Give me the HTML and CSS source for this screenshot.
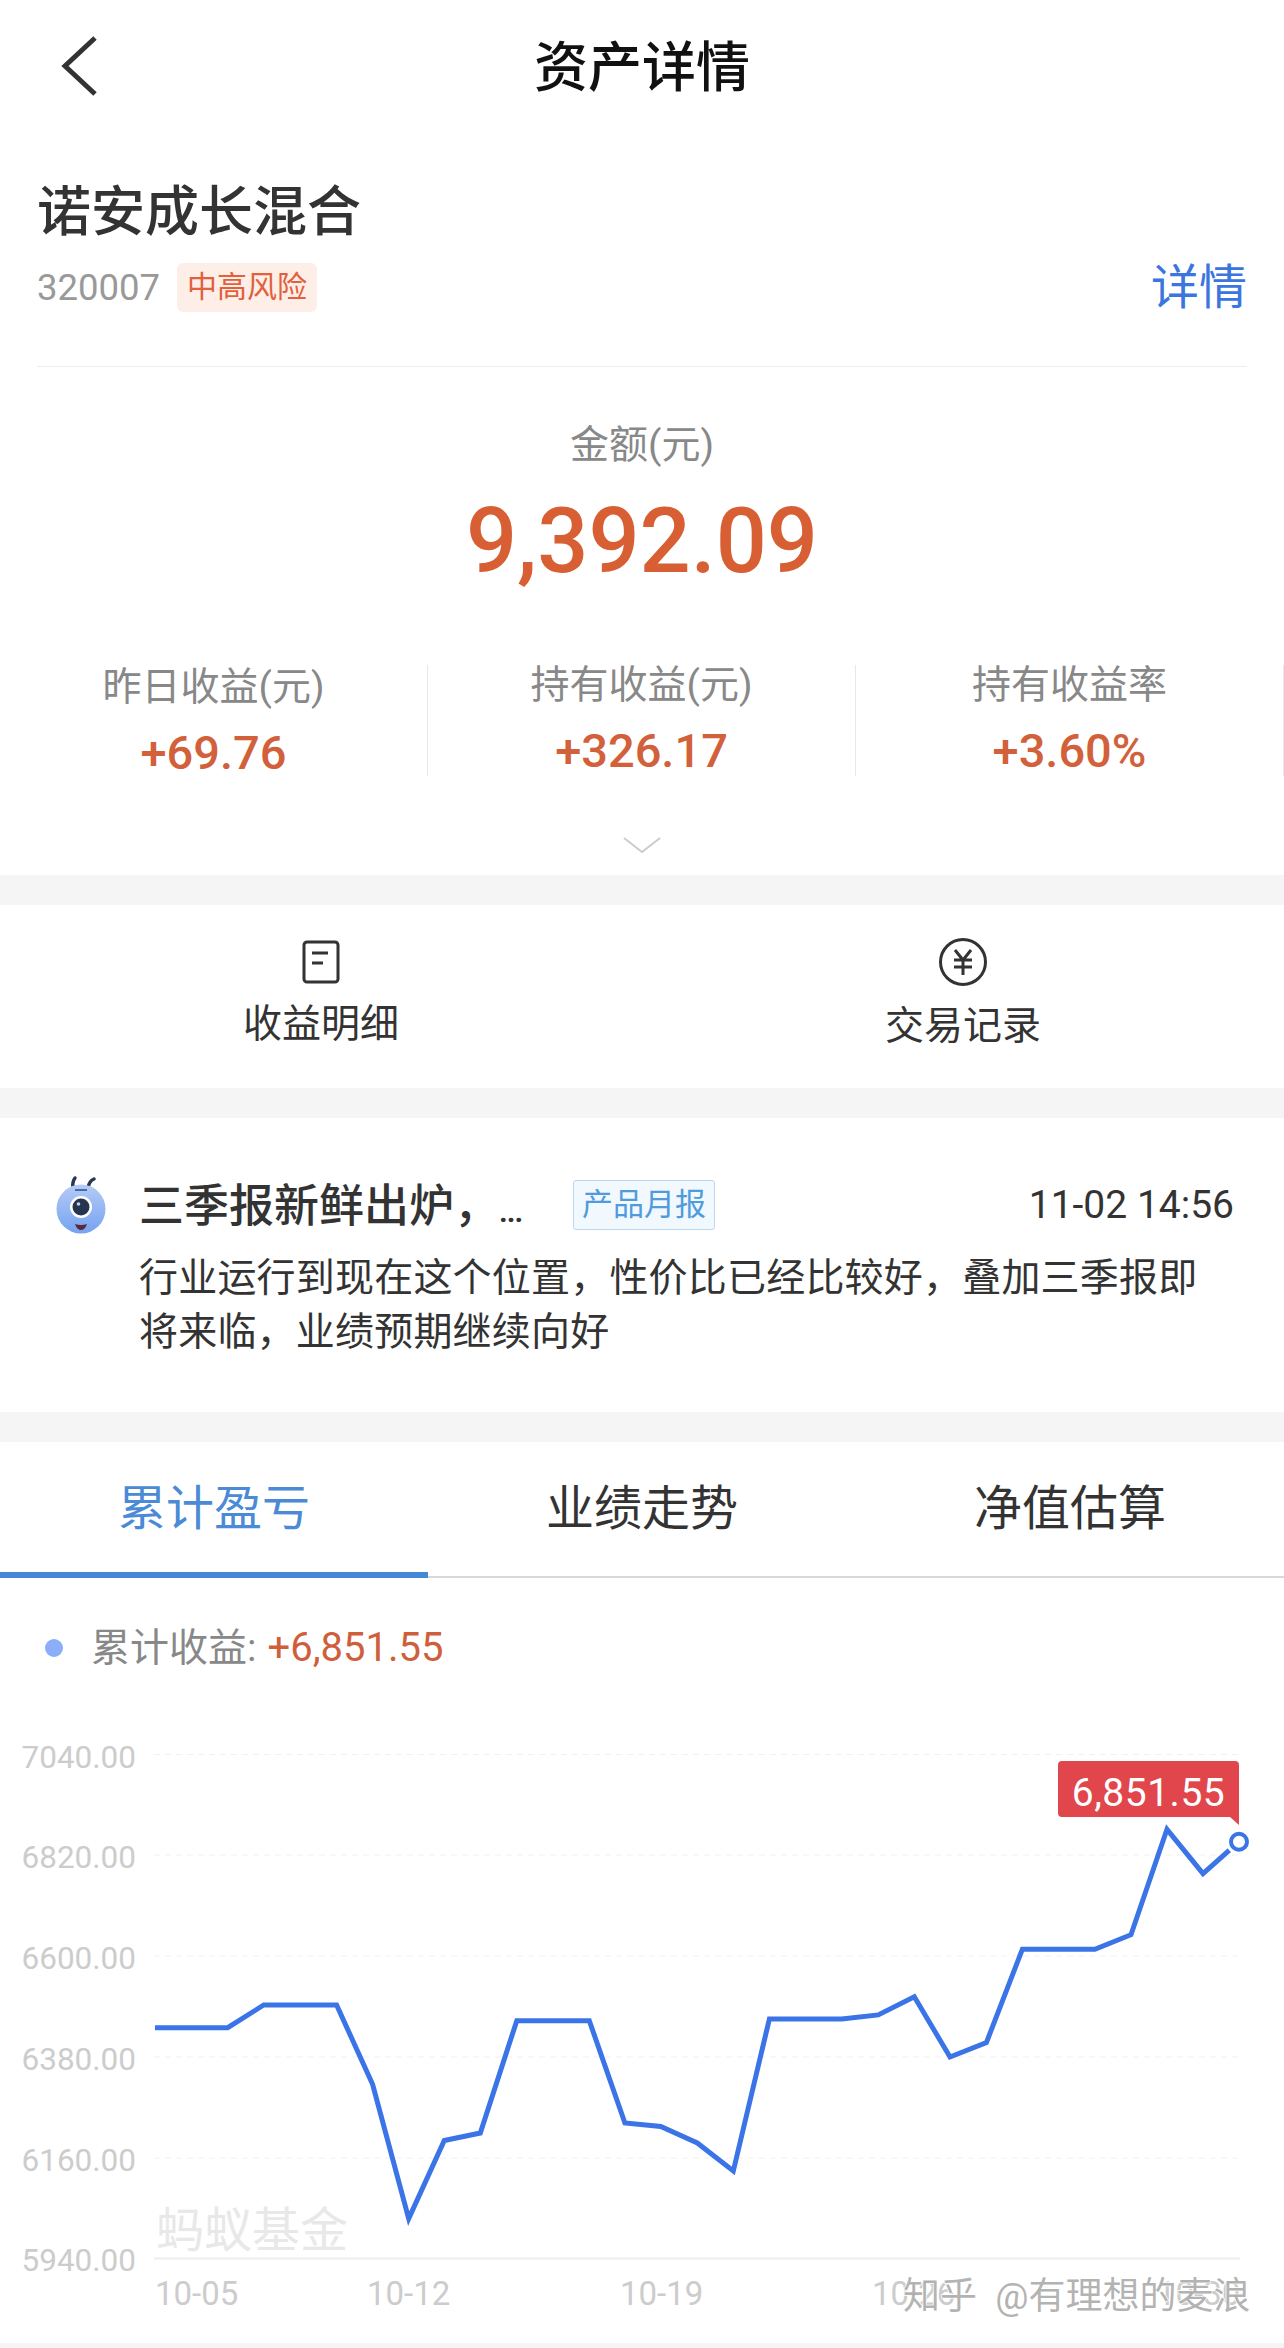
FILE: index.html
```html
<!DOCTYPE html>
<html lang="zh-CN">

<head>
    <meta charset="UTF-8">
    <title>资产详情</title>
    <link rel="stylesheet" href="styles.css">
</head>

<body>
    <div class="nav">
        <svg class="back" width="40" height="62" viewBox="0 0 40 62">
            <path d="M35 3 L5 31 L35 59"></path>
        </svg>
        <h1 class="nav-title">资产详情</h1>
    </div>

    <div class="fund">
        <div class="fund-name">诺安成长混合</div>
        <div class="fund-row">
            <div class="fund-meta">
                <span class="fund-code">320007</span>
                <span class="risk-tag">中高风险</span>
            </div>
            <a class="fund-link">详情</a>
        </div>
    </div>

    <div class="summary">
        <div class="amount-label">金额(元)</div>
        <div class="amount">9,392.09</div>
        <ul class="stats">
            <li class="stat stat-first">
                <div class="stat-label">昨日收益(元)</div>
                <div class="stat-value">+69.76</div>
            </li>
            <li class="stat">
                <div class="stat-label">持有收益(元)</div>
                <div class="stat-value">+326.17</div>
            </li>
            <li class="stat">
                <div class="stat-label">持有收益率</div>
                <div class="stat-value">+3.60%</div>
            </li>
        </ul>
        <svg class="more" width="38" height="17" viewBox="0 0 38 17">
            <path d="M1 1 L19 15 L37 1"></path>
        </svg>
    </div>

    <div class="actions">
        <div class="action">
            <div class="action-icon">
                <svg width="38" height="46" viewBox="0 0 38 46">
                    <rect x="2" y="3" width="34" height="40" rx="3"></rect>
                    <path d="M10 14 H26 M10 24 H21"></path>
                </svg>
            </div>
            <div class="action-label">收益明细</div>
        </div>
        <div class="action action-trade">
            <div class="action-icon">
                <svg width="50" height="50" viewBox="0 0 50 50">
                    <circle cx="25" cy="25" r="22.5"></circle>
                    <path d="M17 13 L25 23 L33 13 M16 23 H34 M16 30 H34 M25 23 V38"></path>
                </svg>
            </div>
            <div class="action-label">交易记录</div>
        </div>
    </div>

    <div class="news">
        <svg class="news-logo" width="54" height="60" viewBox="0 0 54 60">
            <defs>
                <linearGradient id="antBody" x1="0" y1="0" x2="0" y2="1">
                    <stop offset="0" stop-color="#b4cbf6"></stop>
                    <stop offset="1" stop-color="#76a2f0"></stop>
                </linearGradient>
            </defs>
            <path class="ant-feeler" d="M19 14 Q18 8 21 4 M34 14 Q35 7 40 5"></path>
            <ellipse cx="27" cy="35" rx="24.5" ry="24.5" fill="url(#antBody)"></ellipse>
            <path class="ant-brow" d="M21 16 H33"></path>
            <circle cx="27" cy="33" r="11" fill="#fff"></circle>
            <circle cx="27" cy="33" r="8.5" fill="#26344f"></circle>
            <circle cx="24.5" cy="30" r="1.8" fill="#c6d2e6"></circle>
            <path d="M21 50 Q27 52 33 50 Q31 56 27 56 Q23 56 21 50 Z" fill="#5a2a3a"></path>
        </svg>
        <div class="news-main">
            <div class="news-head">
                <div class="news-title">三季报新鲜出炉，<span class="news-dots">...</span></div>
                <span class="news-tag">产品月报</span>
                <span class="news-time">11-02 14:56</span>
            </div>
            <p class="news-text">行业运行到现在这个位置，性价比已经比较好，叠加三季报即将来临，业绩预期继续向好</p>
        </div>
    </div>

    <div class="chart-card">
        <div class="tabs">
            <div class="tab tab-active">累计盈亏</div>
            <div class="tab">业绩走势</div>
            <div class="tab">净值估算</div>
        </div>
        <div class="legend">
            <span class="legend-dot"></span>
            <span class="legend-label">累计收益:</span>
            <span class="legend-value">+6,851.55</span>
        </div>
        <!-- 坐标直接用整页的像素坐标 -->
        <svg class="chart" width="1284" height="675" viewBox="0 1668 1284 675">
            <g class="grid">
                <path d="M154 1754.5 H1240"></path>
                <path d="M154 1855 H1240"></path>
                <path d="M154 1956 H1240"></path>
                <path d="M154 2057 H1240"></path>
                <path d="M154 2158 H1240"></path>
            </g>
            <path class="axis" d="M154 2258.5 H1240"></path>

            <g class="y-labels">
                <text x="136" y="1768">7040.00</text>
                <text x="136" y="1868">6820.00</text>
                <text x="136" y="1969">6600.00</text>
                <text x="136" y="2070">6380.00</text>
                <text x="136" y="2171">6160.00</text>
                <text x="136" y="2271">5940.00</text>
            </g>

            <text class="brand" x="156" y="2247">蚂蚁基金</text>

            <g class="x-labels">
                <text x="155" y="2305">10-05</text>
                <text x="367" y="2305">10-12</text>
                <text x="620" y="2305">10-19</text>
                <text x="872" y="2305">10-26</text>
                <text x="1157" y="2305">10-30</text>
            </g>

            <polyline class="line" points="155,2027.7 191,2027.7 227.7,2027.7 263.7,2005 300,2005 336.6,2005 372.6,2084.3 408.7,2218.6 444.3,2140.5 480.3,2133 516.8,2020.7 553,2020.7 589.3,2020.7 624.9,2123 660.8,2126.4 697.3,2143 733.3,2171 769.4,2019 805.6,2019 841.8,2019 878.3,2014.9 914.3,1996.7 950,2057 986.4,2042.6 1022.4,1949.2 1058.6,1949.2 1094.9,1949.2 1131,1934.7 1167,1829.3 1203,1873.6 1239,1841.7"></polyline>
            <circle class="dot-halo" cx="1239" cy="1841.7" r="13"></circle>
            <circle class="dot" cx="1239" cy="1841.7" r="8"></circle>

            <path class="tip" d="M1062 1761 H1235 Q1239 1761 1239 1765 V1825 L1230 1817 H1062 Q1058 1817 1058 1813 V1765 Q1058 1761 1062 1761 Z"></path>
            <text class="tip-text" x="1148.5" y="1806">6,851.55</text>

            <text class="mark" x="903" y="2309">知乎 @有理想的麦浪</text>
        </svg>
    </div>
</body>

</html>
```
FILE: styles.css
```css
* {
    margin: 0;
    padding: 0;
    list-style: none;
    box-sizing: border-box;
}

body {
    width: 1284px;
    height: 2348px;
    overflow: hidden;
    background: #f5f5f5;
    color: #333;
    font-family: Roboto, "Noto Sans CJK SC", sans-serif;
}

/* 顶部导航 */
.nav {
    position: relative;
    height: 132px;
    padding-top: 6px;
    background: #fff;
    display: flex;
    align-items: center;
    justify-content: center;
}

.back {
    position: absolute;
    left: 60px;
    top: 35px;
}

.back path {
    fill: none;
    stroke: #333;
    stroke-width: 5;
}

.nav-title {
    font-size: 54px;
    line-height: 60px;
    font-weight: 500;
    color: #111;
}

/* 基金信息 */
.fund {
    background: #fff;
    padding: 51px 37px 54px;
    height: 235px;
    position: relative;
}

.fund::after {
    content: "";
    position: absolute;
    left: 37px;
    right: 37px;
    bottom: 0;
    height: 1px;
    background: #eee;
}

.fund-name {
    font-size: 54px;
    line-height: 60px;
    font-weight: 500;
}

.fund-row {
    margin-top: 19px;
    height: 50px;
    display: flex;
    align-items: center;
    justify-content: space-between;
}

.fund-meta {
    display: flex;
    align-items: center;
}

.fund-code {
    font-size: 36.5px;
    color: #999;
}

.risk-tag {
    margin-left: 17px;
    padding: 0 10px;
    height: 49px;
    line-height: 48px;
    font-size: 30px;
    color: #e2603b;
    background: #fdeee8;
    border-radius: 6px;
}

.fund-link {
    margin-bottom: 8px;
    font-size: 48px;
    color: #3a75e0;
}

/* 金额 */
.summary {
    background: #fff;
    height: 508px;
    padding-top: 58px;
    text-align: center;
}

.amount-label {
    font-size: 39px;
    line-height: 40px;
    color: #888;
}

.amount {
    margin-top: 27px;
    font-size: 90px;
    line-height: 100px;
    font-weight: 500;
    color: #d85f33;
}

.stats {
    margin-top: 73px;
    display: flex;
}

.stat {
    width: 428px;
    height: 111px;
    border-right: 1px solid #e8e8e8;
}

.stat-label {
    font-size: 39px;
    line-height: 40px;
    color: #888;
}

.stat-first .stat-label,
.stat-first .stat-value {
    position: relative;
    top: 2px;
}

.stat-value {
    margin-top: 26px;
    font-size: 47px;
    line-height: 40px;
    font-weight: 500;
    color: #d2603a;
}

.more {
    display: block;
    margin: 61px auto 0;
}

.more path {
    fill: none;
    stroke: #ccc;
    stroke-width: 2;
}

/* 收益明细 交易记录 */
.actions {
    margin-top: 30px;
    height: 183px;
    background: #fff;
    display: flex;
}

.action {
    width: 642px;
    padding-top: 33px;
    text-align: center;
}

.action-icon {
    height: 48px;
    display: flex;
    align-items: center;
    justify-content: center;
}

.action-icon svg * {
    fill: none;
    stroke: #333;
    stroke-width: 3;
}

.action-label {
    margin-top: 18px;
    font-size: 39px;
    line-height: 40px;
}

.action-trade .action-label {
    margin-top: 20px;
}

/* 月报 */
.news {
    margin-top: 30px;
    height: 294px;
    background: #fff;
    padding: 56px 50px 0 54px;
    display: flex;
}

.news-logo {
    flex: none;
}

.ant-feeler {
    fill: none;
    stroke: #2b3650;
    stroke-width: 3.5;
    stroke-linecap: round;
}

.ant-brow {
    fill: none;
    stroke: #4b6aa8;
    stroke-width: 2;
}

.news-main {
    flex: 1;
    margin-left: 31px;
    padding-top: 6px;
}

.news-head {
    height: 50px;
    display: flex;
    align-items: center;
}

.news-title {
    width: 434px;
    margin-top: 8px;
    font-size: 45px;
    line-height: 50px;
    font-weight: 500;
    white-space: nowrap;
}

.news-dots {
    font-size: 30px;
    font-weight: 700;
    letter-spacing: -1px;
}

.news-tag {
    width: 142px;
    height: 50px;
    line-height: 48px;
    text-align: center;
    font-size: 31px;
    color: #4f9bdc;
    background: #f1f8fe;
    border: 1px solid #bcd8f0;
    border-radius: 3px;
}

.news-time {
    margin-left: auto;
    font-size: 39px;
    color: #333;
}

.news-text {
    margin-top: 21px;
    width: 1075px;
    font-size: 39px;
    letter-spacing: 0.2px;
    line-height: 54px;
}

/* 图表 */
.chart-card {
    margin-top: 30px;
    height: 901px;
    background: #fff;
}

.tabs {
    height: 136px;
    display: flex;
    border-bottom: 2px solid #d8d8d8;
}

.tab {
    width: 428px;
    height: 134px;
    line-height: 134px;
    text-align: center;
    font-size: 48px;
}

.tab-active {
    height: 136px;
    margin-bottom: -2px;
    color: #4a8ad6;
    border-bottom: 6px solid #4688d8;
}

.legend {
    height: 90px;
    padding: 50px 0 0 45px;
    display: flex;
    align-items: baseline;
    font-size: 39px;
    line-height: 40px;
}

.legend-dot {
    align-self: center;
    width: 18px;
    height: 18px;
    border-radius: 50%;
    background: #8aaef7;
}

.legend-label {
    margin-left: 28px;
    color: #888;
}

.legend-value {
    margin-left: 11px;
    font-size: 40px;
    color: #cf5f3c;
}

.chart {
    display: block;
}

.grid path {
    fill: none;
    stroke: #f0f0f0;
    stroke-width: 1;
    stroke-dasharray: 6 5;
}

.axis {
    fill: none;
    stroke: #eee;
    stroke-width: 2;
}

.y-labels text {
    text-anchor: end;
    font-size: 31.5px;
    fill: #ccc;
}

.x-labels text {
    font-size: 33px;
    fill: #ccc;
}

.brand {
    font-size: 48px;
    fill: #e8e8e8;
}

.line {
    fill: none;
    stroke: #3a74e6;
    stroke-width: 5;
    stroke-linejoin: miter;
}

.dot-halo {
    fill: #fff;
}

.dot {
    fill: #fff;
    stroke: #3a74e6;
    stroke-width: 4;
}

.tip {
    fill: #e0464b;
}

.tip-text {
    text-anchor: middle;
    font-size: 39px;
    letter-spacing: 0.5px;
    fill: #fff;
}

.mark {
    font-size: 37px;
    word-spacing: 9px;
    fill: #a6a6a6;
    fill-opacity: 0.85;
    stroke: #fff;
    stroke-width: 1.5;
    paint-order: stroke;
}
```
